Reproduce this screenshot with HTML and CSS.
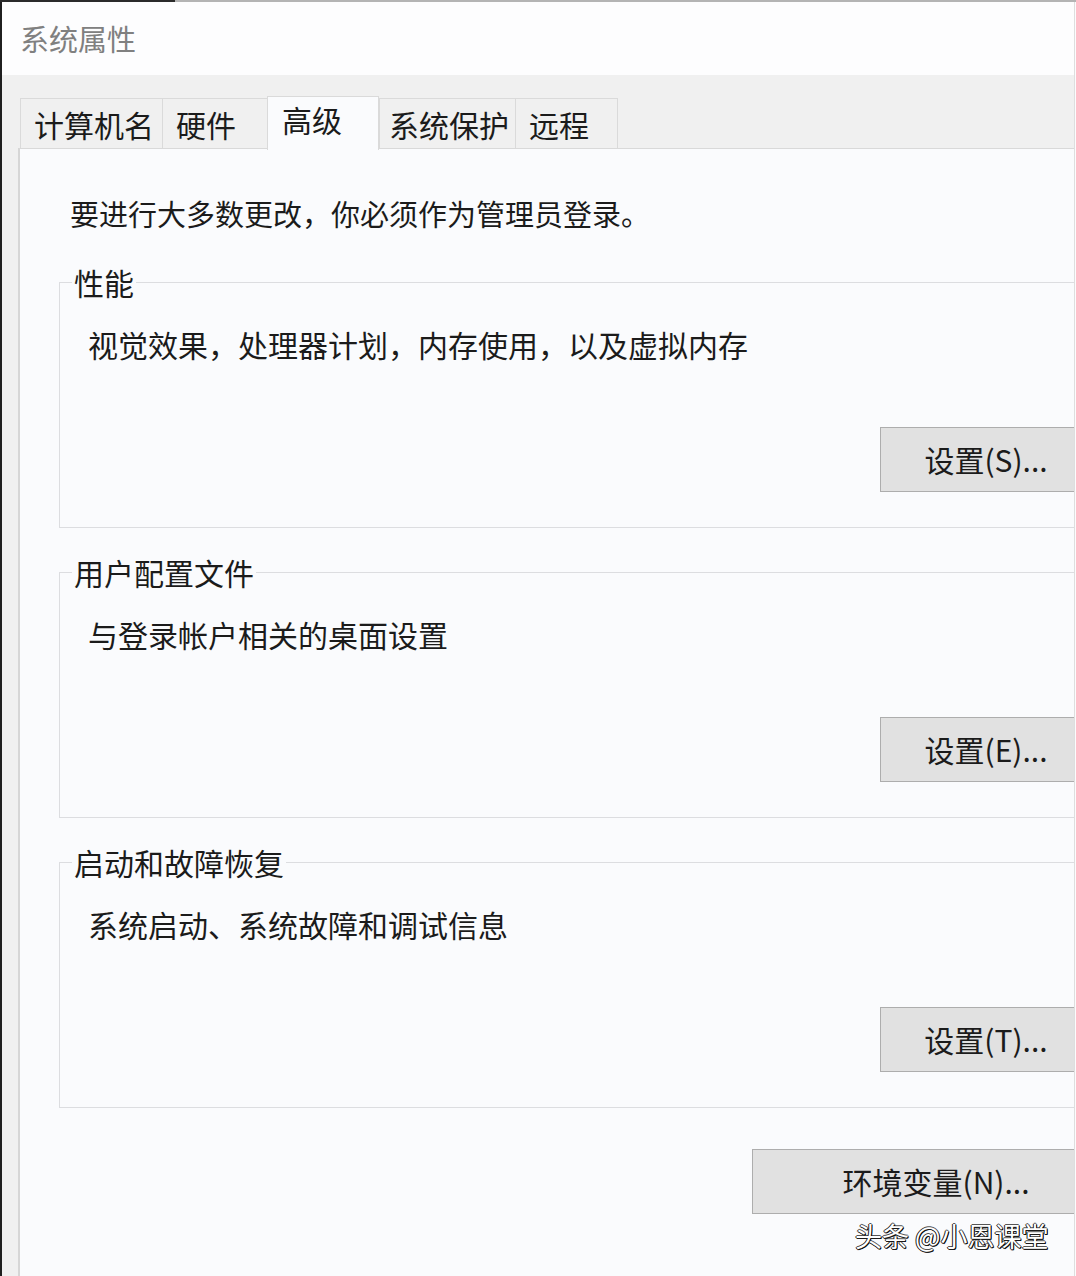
FILE: index.html
```html
<!DOCTYPE html>
<html lang="zh-CN">
<head>
<meta charset="utf-8">
<title>系统属性</title>
<link rel="stylesheet" href="styles.css">
</head>
<body>
<div class="topline"></div>
<div class="window">
  <div class="titlebar">系统属性</div>
  <div class="tabs">
    <div class="tab t1">计算机名</div>
    <div class="tab t2">硬件</div>
    <div class="tab t3 active">高级</div>
    <div class="tab t4">系统保护</div>
    <div class="tab t5">远程</div>
  </div>
  <div class="panel">
    <div class="content">
      <p class="intro">要进行大多数更改，你必须作为管理员登录。</p>
      <fieldset class="group">
        <legend>性能</legend>
        <p class="desc">视觉效果，处理器计划，内存使用，以及虚拟内存</p>
        <button class="btn">设置(S)...</button>
      </fieldset>
      <fieldset class="group">
        <legend>用户配置文件</legend>
        <p class="desc">与登录帐户相关的桌面设置</p>
        <button class="btn">设置(E)...</button>
      </fieldset>
      <fieldset class="group">
        <legend>启动和故障恢复</legend>
        <p class="desc">系统启动、系统故障和调试信息</p>
        <button class="btn">设置(T)...</button>
      </fieldset>
      <button class="btn env">环境变量(N)...</button>
    </div>
  </div>
</div>
<div class="watermark">头条 @小恩课堂</div>
</body>
</html>
```

FILE: styles.css
```css
html, body {
  margin: 0;
  padding: 0;
}
body {
  width: 1076px;
  height: 1276px;
  overflow: hidden;
  position: relative;
  background: #fcfcfd;
  font-family: "Noto Sans CJK SC", "Noto Sans", sans-serif;
  color: #1b1b1b;
}
.topline {
  height: 2px;
  background: linear-gradient(to right, #2b2b2b 0, #2b2b2b 175px, #b4b4b4 175px, #b4b4b4 100%);
}
.window {
  width: 1072px;
  height: 1274px;
  border-left: 2px solid #1f1f1f;
  border-right: 1px solid #dedede;
  overflow: hidden;
  background: #f0f0f0;
  display: flex;
  flex-direction: column;
}
.titlebar {
  height: 73px;
  flex: none;
  background: #fdfdfe;
  padding-left: 18px;
  font-size: 29px;
  line-height: 73px;
  color: #808080;
}
.tabs {
  height: 73px;
  flex: none;
  display: flex;
  align-items: flex-end;
  padding-left: 18px;
  background: #f0f0f0;
}
.tab {
  box-sizing: border-box;
  height: 50px;
  border: 1px solid #dadada;
  border-bottom: none;
  border-right: none;
  background: #f0f0f0;
  font-size: 30px;
  line-height: 48px;
  padding: 1px 0 0 13px;
  white-space: nowrap;
}
.t1 { width: 142px; }
.t2 { width: 105px; }
.t3 { width: 112px; padding-left: 14px; }
.t4 { width: 136px; padding-left: 9px; }
.t5 { width: 103px; border-right: 1px solid #dadada; }
.tab.active {
  height: 54px;
  margin-bottom: -2px;
  padding-top: 0;
  line-height: 44px;
  background: #fafbfd;
  border-right: 1px solid #dadada;
  position: relative;
  z-index: 1;
}
.panel {
  flex: 1;
  margin-left: 16px;
  border-top: 1px solid #d9d9d9;
  border-left: 2px solid #d6d6d6;
  background: #fafbfd;
}
.content {
  width: 1100px;
  padding-top: 46px;
}
.intro {
  margin: 0 0 33px 50px;
  font-size: 29px;
  line-height: 36px;
}
.group {
  box-sizing: border-box;
  width: 1053px;
  margin: 0 0 26px 39px;
  padding: 0 0 35px 12px;
  border: 1px solid #dcdde0;
  min-width: 0;
}
.group legend {
  padding: 0 2px;
  font-size: 30px;
  line-height: 36px;
  background: #fafbfd;
}
.desc {
  margin: 26px 0 0 16px;
  font-size: 30px;
  line-height: 36px;
}
.btn {
  display: block;
  box-sizing: border-box;
  width: 212px;
  height: 65px;
  margin: 65px 19px 0 auto;
  background: #e1e1e1;
  border: 1px solid #adadad;
  border-radius: 0;
  font-family: "Noto Sans CJK SC", "Noto Sans", sans-serif;
  font-size: 30px;
  color: #1b1b1b;
  padding: 0;
  line-height: 63px;
  text-align: center;
}
.btn.env {
  width: 368px;
  margin: 41px 0 0 732px;
}
.watermark {
  position: absolute;
  left: 855px;
  top: 1218px;
  font-size: 27px;
  line-height: 36px;
  color: #ffffff;
  text-shadow: -1px 0 #1a1a1a, 0 1px #1a1a1a, 1px 1px #000, 1px 0 #555, 0 -1px #555;
  white-space: nowrap;
}
```
